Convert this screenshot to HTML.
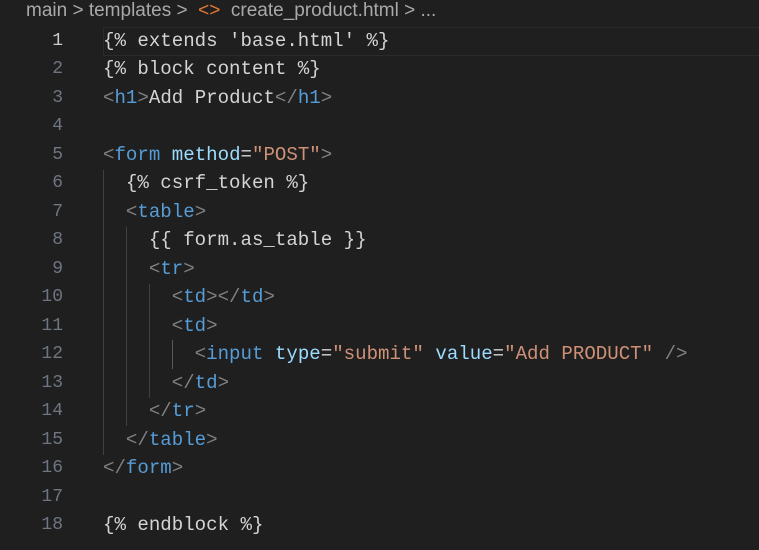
<!DOCTYPE html>
<html><head><style>
body{margin:0;width:759px;height:550px;background:#1f1f1f;overflow:hidden;position:relative;font-family:"Liberation Mono",monospace;}
.bc{position:absolute;left:26px;top:0;height:24px;line-height:22px;font-family:"Liberation Sans",sans-serif;font-size:19px;color:#a9a9a9;white-space:pre;}
.bc .i{color:#e37933;}
.cur{position:absolute;left:103px;right:0;top:27px;height:27px;border:1px solid #2b2b2b;border-right:none;}
.nums{position:absolute;left:0;top:27px;width:63px;text-align:right;font-size:18px;color:#6e7681;line-height:28.47px;}
.nums div{height:28.47px;}
.nums .a{color:#ccc;}
.code{position:absolute;left:103px;top:27px;font-size:19.1px;color:#d4d4d4;line-height:28.47px;}
.code div{height:28.47px;white-space:pre;}
.g{position:absolute;width:1px;background:#404040;}
.b{color:#808080}.t{color:#569cd6}.at{color:#9cdcfe}.s{color:#ce9178}
</style></head><body>
<div class="bc">main &gt; templates &gt;  <span class="i">&lt;&gt;</span>  create_product.html &gt; ...</div>
<div class="cur"></div>
<div class="g" style="left:103px;top:170px;height:285px"></div>
<div class="g" style="left:126px;top:227px;height:199px"></div>
<div class="g" style="left:149px;top:284px;height:114px"></div>
<div class="g" style="left:172px;top:340px;height:29px;background:#5a5a5a"></div>
<div class="nums">
<div class="a">1</div><div>2</div><div>3</div><div>4</div><div>5</div><div>6</div><div>7</div><div>8</div><div>9</div><div>10</div><div>11</div><div>12</div><div>13</div><div>14</div><div>15</div><div>16</div><div>17</div><div>18</div>
</div>
<div class="code">
<div>{% extends 'base.html' %}</div>
<div>{% block content %}</div>
<div><span class="b">&lt;</span><span class="t">h1</span><span class="b">&gt;</span>Add Product<span class="b">&lt;/</span><span class="t">h1</span><span class="b">&gt;</span></div>
<div></div>
<div><span class="b">&lt;</span><span class="t">form</span> <span class="at">method</span>=<span class="s">"POST"</span><span class="b">&gt;</span></div>
<div>  {% csrf_token %}</div>
<div>  <span class="b">&lt;</span><span class="t">table</span><span class="b">&gt;</span></div>
<div>    {{ form.as_table }}</div>
<div>    <span class="b">&lt;</span><span class="t">tr</span><span class="b">&gt;</span></div>
<div>      <span class="b">&lt;</span><span class="t">td</span><span class="b">&gt;&lt;/</span><span class="t">td</span><span class="b">&gt;</span></div>
<div>      <span class="b">&lt;</span><span class="t">td</span><span class="b">&gt;</span></div>
<div>        <span class="b">&lt;</span><span class="t">input</span> <span class="at">type</span>=<span class="s">"submit"</span> <span class="at">value</span>=<span class="s">"Add PRODUCT"</span> <span class="b">/&gt;</span></div>
<div>      <span class="b">&lt;/</span><span class="t">td</span><span class="b">&gt;</span></div>
<div>    <span class="b">&lt;/</span><span class="t">tr</span><span class="b">&gt;</span></div>
<div>  <span class="b">&lt;/</span><span class="t">table</span><span class="b">&gt;</span></div>
<div><span class="b">&lt;/</span><span class="t">form</span><span class="b">&gt;</span></div>
<div></div>
<div>{% endblock %}</div>
</div>
</body></html>
